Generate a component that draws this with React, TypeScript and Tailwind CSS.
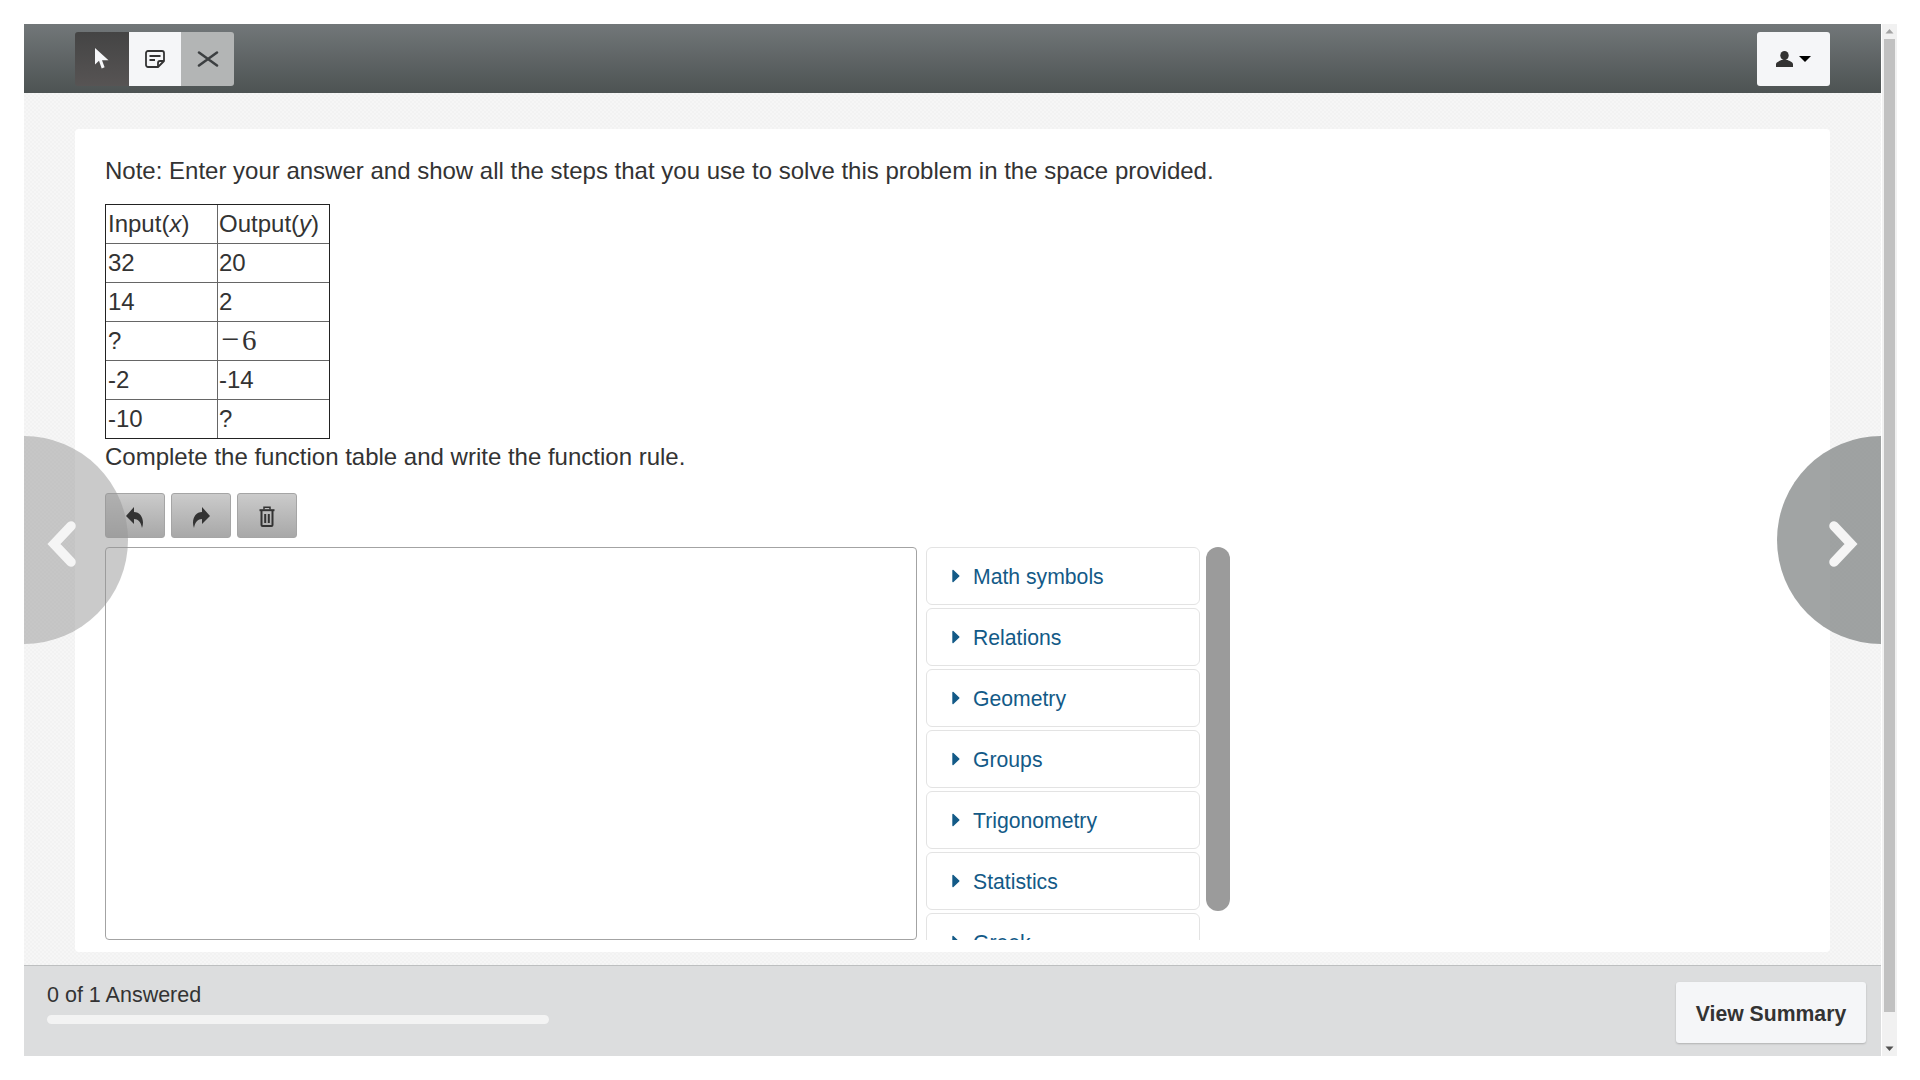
const rows = [
  ["32", "20"],
  ["14", "2"],
  ["?", "minus"],
  ["-2", "-14"],
  ["-10", "?"],
];

const symbols = ["Math symbols", "Relations", "Geometry", "Groups", "Trigonometry", "Statistics", "Greek"];

function Caret() {
  return (
    <svg width="8" height="14" viewBox="0 0 8 14" className="shrink-0">
      <path d="M1 1.5 L6.8 7 L1 12.5 Z" fill="#135a87" stroke="#135a87" strokeWidth="1.4" strokeLinejoin="round" />
    </svg>
  );
}

function Chevron({ flip }: { flip?: boolean }) {
  return (
    <svg width="30" height="48" viewBox="0 0 30 48">
      <path
        d={flip ? "M6 6 L23 24 L6 42" : "M24 6 L7 24 L24 42"}
        fill="none"
        stroke="#f5f5f5"
        strokeWidth="9.5"
        strokeLinecap="round"
        strokeLinejoin="miter"
      />
    </svg>
  );
}

function ArrowIcon({ flip }: { flip?: boolean }) {
  return (
    <svg width="18" height="22" viewBox="0 0 18 22" className={flip ? "-scale-x-100" : ""}>
      <path d="M8 1 L0 10 L8 18 V13 C12 13 15 16 16 22 C19 14 15 6 8 6 Z" fill="#333" />
    </svg>
  );
}

function TrashIcon() {
  return (
    <svg width="16" height="21" viewBox="0 0 16 21" fill="none" stroke="#333" strokeWidth="2">
      <path d="M5 3.5 V1.2 H11 V3.5" strokeWidth="1.5" />
      <path d="M0.5 4.2 H15.5" />
      <path d="M2.5 5 V19 Q2.5 20 3.5 20 H12.5 Q13.5 20 13.5 19 V5" />
      <path d="M6.2 8 V17 M9.8 8 V17" />
    </svg>
  );
}

function ToolButton({ children }: { children: React.ReactNode }) {
  return (
    <button className="w-[60px] h-[45px] pt-[2px] flex items-center justify-center rounded-[3px] border border-[#a5a5a5] bg-gradient-to-b from-[#cbcbcb] to-[#a8a8a8]">
      {children}
    </button>
  );
}

export default function App() {
  return (
    <div className="w-[1920px] h-[1080px] bg-white pt-6 pl-6 flex overflow-hidden font-['Liberation_Sans',sans-serif] text-[#333]">
      {/* main frame */}
      <div className="relative w-[1857px] h-[1032px] flex flex-col overflow-hidden">
        <div className="h-[69px] shrink-0 bg-gradient-to-b from-[#727779] to-[#4d5353] pl-[51px] pr-[51px] flex items-center justify-between">
          <div className="flex h-[54px]">
            <button className="w-[54px] flex items-center justify-center rounded-l-[3px] bg-gradient-to-b from-[#444444] to-[#575454]">
              <svg width="14" height="21" viewBox="0 0 14 21">
                <path d="M0 0 V16.5 L4 12.8 L6.7 20.5 L9.6 19.3 L7 12.2 L13.5 12.2 Z" fill="#f5f6f8" />
              </svg>
            </button>
            <button className="w-[52px] flex items-center justify-center bg-[#f5f6f8]">
              <svg width="20" height="18" viewBox="0 0 20 18" fill="none" stroke="#333" strokeWidth="1.8" strokeLinejoin="round">
                <path d="M1 3 a2 2 0 0 1 2-2 h14 a2 2 0 0 1 2 2 v8 l-6 6 h-10 a2 2 0 0 1 -2 -2 Z" />
                <path d="M13 17 v-4 a2 2 0 0 1 2-2 h4" />
                <path d="M4.5 6 H15.5 M4.5 10 H10" />
              </svg>
            </button>
            <button className="w-[53px] flex items-center justify-center rounded-r-[3px] bg-[#b3b5b5]">
              <svg width="22" height="16" viewBox="0 0 22 16">
                <path d="M2 1.5 L20 14.5 M20 1.5 L2 14.5" stroke="#3c3f41" strokeWidth="2.5" strokeLinecap="round" />
              </svg>
            </button>
          </div>
          <button className="w-[73px] h-[54px] flex items-center justify-center gap-[6px] rounded-[3px] bg-[#f5f6f8]">
            <svg width="17" height="16" viewBox="0 0 17 16">
              <ellipse cx="8.5" cy="4.6" rx="4.2" ry="4.6" fill="#333" />
              <path d="M0 16 V13.2 C0 11 3.4 10.2 5.4 9 H11.6 C13.6 10.2 17 11 17 13.2 V16 Z" fill="#333" />
            </svg>
            <span className="w-0 h-0 border-x-[6px] border-x-transparent border-t-[6px] border-t-black" />
          </button>
        </div>

        <div className="flex-1 bg-[repeating-conic-gradient(#f2f2f2_0_25%,#f6f6f6_0_50%)] bg-[length:4px_4px] px-[51px] pt-9">
          <div className="h-[823px] bg-white rounded-[4px] pl-[30px] pt-[25px]">
            <p className="text-[24px] leading-[34px]">
              Note: Enter your answer and show all the steps that you use to solve this problem in the space provided.
            </p>
            <table className="mt-[16px] w-[225px] border-separate border-spacing-0 border border-[#222] text-[24px] leading-[30px] table-fixed">
              <tbody>
                <tr className="h-[39px]">
                  <td className="w-[112px] border-r border-b border-[#666] px-[2px]">
                    Input(<i>x</i>)
                  </td>
                  <td className="border-b border-[#666] px-[1px]">
                    Output(<i>y</i>)
                  </td>
                </tr>
                {rows.map((r, i) => (
                  <tr key={i} className={i === 4 ? "h-[38px]" : "h-[39px]"}>
                    <td className={i === 4 ? "border-r border-[#666] px-[2px]" : "border-r border-b border-[#666] px-[2px]"}>{r[0]}</td>
                    <td className={i === 4 ? "px-[1px]" : "border-b border-[#666] px-[1px]"}>
                      {r[1] === "minus" ? (
                        <span className="inline-block -translate-y-px font-['Liberation_Serif',serif] text-[29px] leading-[30px]">
                          <span className="ml-[2px] mr-[3px] text-[32px] leading-[30px] font-light">−</span>6
                        </span>
                      ) : (
                        r[1]
                      )}
                    </td>
                  </tr>
                ))}
              </tbody>
            </table>
            <p className="mt-[1px] text-[24px] leading-[34px]">Complete the function table and write the function rule.</p>

            <div className="flex gap-[6px] mt-[19px]">
              <ToolButton>
                <ArrowIcon />
              </ToolButton>
              <ToolButton>
                <ArrowIcon flip />
              </ToolButton>
              <ToolButton>
                <TrashIcon />
              </ToolButton>
            </div>

            <div className="flex mt-[9px] h-[393px]">
              <div className="w-[812px] border border-[#a3a3a3] rounded-[4px] bg-white" />
              <div className="ml-[9px] w-[274px] h-[393px] overflow-hidden flex flex-col gap-[3px]">
                {symbols.map((s) => (
                  <div
                    key={s}
                    className="h-[58px] shrink-0 border border-[#e3e3e3] rounded-[6px] bg-white flex items-center pl-[25px] gap-[13px] text-[21.2px] text-[#135a87]"
                  >
                    <Caret />
                    <span className="pt-[2px]">{s}</span>
                  </div>
                ))}
              </div>
              <div className="ml-[6px] w-[24px] h-[364px] rounded-[12px] bg-[#9b9b9b]" />
            </div>
          </div>
        </div>

        <div className="h-[91px] shrink-0 border-t border-[#bdbfc0] bg-[#dcddde] flex justify-between pl-[23px] pr-[15px]">
          <div className="pt-[14px]">
            <div className="text-[21.5px] leading-[30px]">0 of 1 Answered</div>
            <div className="mt-[5px] w-[502px] h-[9px] rounded-full bg-[#f3f3f3]" />
          </div>
          <button className="mt-[16px] w-[190px] h-[61px] pt-[2px] rounded-[3px] bg-[#f5f6f8] shadow-[0_1px_2px_rgba(0,0,0,0.2)] font-bold text-[21.2px] text-[#333]">
            View Summary
          </button>
        </div>

        {/* prev / next overlays */}
        <div className="absolute left-[-104px] top-[412px] w-[208px] h-[208px] rounded-full bg-[rgba(150,150,150,0.5)] flex items-center justify-end pr-[51px] pt-[8px]">
          <Chevron />
        </div>
        <div className="absolute right-[-104px] top-[412px] w-[208px] h-[208px] rounded-full bg-[rgba(130,133,134,0.75)] flex items-center justify-start pl-[51px] pt-[8px]">
          <Chevron flip />
        </div>
      </div>

      {/* page scrollbar */}
      <div className="ml-[1px] w-[15px] h-[1032px] bg-[#f1f1f1] flex flex-col items-center">
        <svg width="15" height="15" viewBox="0 0 15 15" className="shrink-0">
          <path d="M3.5 9.5 L7.5 5 L11.5 9.5 Z" fill="#a3a3a3" />
        </svg>
        <div className="w-[11px] h-[973px] bg-[#c1c1c1]" />
        <div className="flex-1" />
        <svg width="15" height="15" viewBox="0 0 15 15" className="shrink-0">
          <path d="M3.5 5.5 L7.5 10 L11.5 5.5 Z" fill="#505050" />
        </svg>
      </div>
    </div>
  );
}
